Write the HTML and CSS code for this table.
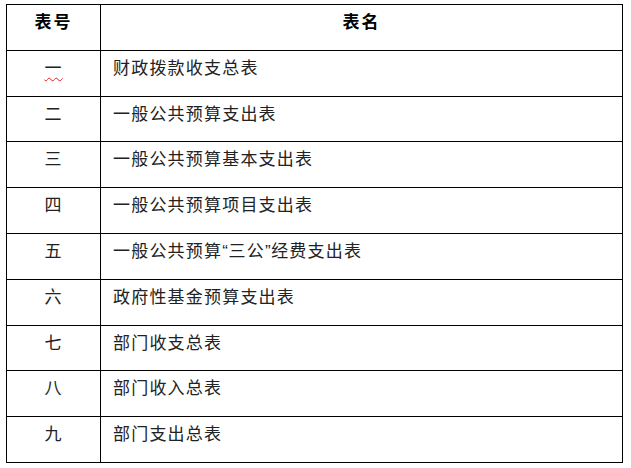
FILE: index.html
```html
<!DOCTYPE html>
<html lang="zh-CN">
<head>
<meta charset="utf-8">
<title>表目录</title>
<link rel="stylesheet" href="styles.css">
</head>
<body>
<table class="list">
  <colgroup><col class="c-no"><col class="c-name"></colgroup>
  <thead>
    <tr><th>表号</th><th>表名</th></tr>
  </thead>
  <tbody>
    <tr><td class="no"><span class="spell">一</span></td><td class="name">财政拨款收支总表</td></tr>
    <tr><td class="no">二</td><td class="name">一般公共预算支出表</td></tr>
    <tr><td class="no">三</td><td class="name">一般公共预算基本支出表</td></tr>
    <tr><td class="no">四</td><td class="name">一般公共预算项目支出表</td></tr>
    <tr><td class="no">五</td><td class="name">一般公共预算<span class="q">“</span>三公<span class="q">”</span>经费支出表</td></tr>
    <tr><td class="no">六</td><td class="name">政府性基金预算支出表</td></tr>
    <tr><td class="no">七</td><td class="name">部门收支总表</td></tr>
    <tr><td class="no">八</td><td class="name">部门收入总表</td></tr>
    <tr><td class="no">九</td><td class="name">部门支出总表</td></tr>
  </tbody>
</table>
</body>
</html>
```
FILE: styles.css
```css
html, body {
  margin: 0;
  padding: 0;
  background: #fff;
}
body {
  padding: 4px 0 0 6px;
  font-family: "Liberation Sans", "Noto Sans CJK SC", sans-serif;
  color: #222;
}
.list {
  border-collapse: collapse;
  table-layout: fixed;
  width: 617px;
}
.c-no { width: 94px; }
.list th,
.list td {
  border: 1px solid #000;
  height: 45.8px;
  box-sizing: border-box;
  padding: 8px 0 0 0;
  vertical-align: top;
  font-size: 17px;
  line-height: 20px;
  letter-spacing: 1.2px;
}
.list th {
  font-weight: bold;
  text-align: center;
  color: #000;
  letter-spacing: 2px;
}
.list td.no {
  text-align: center;
}
.list td.name {
  padding-left: 12px;
}
.q {
  letter-spacing: 0.6px;
}
.spell {
  text-decoration: underline wavy #e02020;
  text-decoration-thickness: 1px;
  text-underline-offset: 3px;
}
```
